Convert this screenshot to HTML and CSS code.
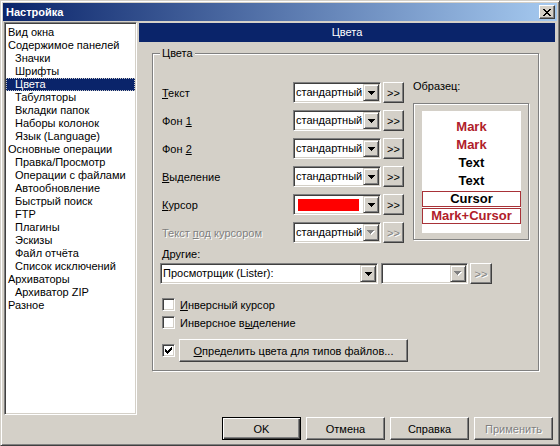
FILE: index.html
```html
<!DOCTYPE html>
<html lang="ru">
<head>
<meta charset="utf-8">
<title>Настройка</title>
<link rel="stylesheet" href="styles.css">
</head>
<body>
<div class="window">
  <div class="titlebar">
    <span class="title">Настройка</span>
    <span class="close"><svg width="8" height="7" viewBox="0 0 8 7"><path d="M0 0h2v1h1v1h2V1h1V0h2v1H7v1H6v1H5v1h1v1h1v1h1v1H6V6H5V5H3v1H2v1H0V6h1V5h1V4h1V3H2V2H1V1H0z" fill="#000"/></svg></span>
  </div>
  <div class="main">
    <ul class="tree">
      <li class="l0">Вид окна</li>
      <li class="l0">Содержимое панелей</li>
      <li class="l1">Значки</li>
      <li class="l1">Шрифты</li>
      <li class="l1 sel">Цвета</li>
      <li class="l1">Табуляторы</li>
      <li class="l1">Вкладки папок</li>
      <li class="l1">Наборы колонок</li>
      <li class="l1">Язык (Language)</li>
      <li class="l0">Основные операции</li>
      <li class="l1">Правка/Просмотр</li>
      <li class="l1">Операции с файлами</li>
      <li class="l1">Автообновление</li>
      <li class="l1">Быстрый поиск</li>
      <li class="l1">FTP</li>
      <li class="l1">Плагины</li>
      <li class="l1">Эскизы</li>
      <li class="l1">Файл отчёта</li>
      <li class="l1">Список исключений</li>
      <li class="l0">Архиваторы</li>
      <li class="l1">Архиватор ZIP</li>
      <li class="l0">Разное</li>
    </ul>
    <div class="panel">
      <div class="panel-head">Цвета</div>
      <fieldset class="group">
        <legend>Цвета</legend>
        <div class="top">
          <div class="rows">
            <div class="row">
              <span class="lbl"><u>Т</u>екст</span>
              <div class="combo"><span class="val">стандартный</span><span class="drop"><svg width="7" height="4" viewBox="0 0 7 4"><path d="M0 0h7v1H6v1H5v1H4v1H3V3H2V2H1V1H0z" fill="#000"/></svg></span></div>
              <span class="btn more">&gt;&gt;</span>
            </div>
            <div class="row">
              <span class="lbl">Фон <u>1</u></span>
              <div class="combo"><span class="val">стандартный</span><span class="drop"><svg width="7" height="4" viewBox="0 0 7 4"><path d="M0 0h7v1H6v1H5v1H4v1H3V3H2V2H1V1H0z" fill="#000"/></svg></span></div>
              <span class="btn more">&gt;&gt;</span>
            </div>
            <div class="row">
              <span class="lbl">Фон <u>2</u></span>
              <div class="combo"><span class="val">стандартный</span><span class="drop"><svg width="7" height="4" viewBox="0 0 7 4"><path d="M0 0h7v1H6v1H5v1H4v1H3V3H2V2H1V1H0z" fill="#000"/></svg></span></div>
              <span class="btn more">&gt;&gt;</span>
            </div>
            <div class="row">
              <span class="lbl"><u>В</u>ыделение</span>
              <div class="combo"><span class="val">стандартный</span><span class="drop"><svg width="7" height="4" viewBox="0 0 7 4"><path d="M0 0h7v1H6v1H5v1H4v1H3V3H2V2H1V1H0z" fill="#000"/></svg></span></div>
              <span class="btn more">&gt;&gt;</span>
            </div>
            <div class="row">
              <span class="lbl"><u>К</u>урсор</span>
              <div class="combo"><span class="swatch"></span><span class="drop"><svg width="7" height="4" viewBox="0 0 7 4"><path d="M0 0h7v1H6v1H5v1H4v1H3V3H2V2H1V1H0z" fill="#000"/></svg></span></div>
              <span class="btn more">&gt;&gt;</span>
            </div>
            <div class="row">
              <span class="lbl disabled">Текст <u>п</u>од курсором</span>
              <div class="combo"><span class="val">стандартный</span><span class="drop"><svg width="8" height="5" viewBox="0 0 8 5"><path d="M1 1h7v1H7v1H6v1H5v1H4V4H3V3H2V2H1z" fill="#fff"/><path d="M0 0h7v1H6v1H5v1H4v1H3V3H2V2H1V1H0z" fill="#808080"/></svg></span></div>
              <span class="btn more disabled">&gt;&gt;</span>
            </div>
          </div>
          <div class="sample-col">
            <div class="sample-lbl">Образец:</div>
            <div class="sample-frame">
              <div class="sample">
                <div class="s-line mark">Mark</div>
                <div class="s-line mark">Mark</div>
                <div class="s-line">Text</div>
                <div class="s-line">Text</div>
                <div class="s-cur">Cursor</div>
                <div class="s-cur mark">Mark+Cursor</div>
              </div>
            </div>
          </div>
        </div>
        <div class="other-lbl"><u>Д</u>ругие:</div>
        <div class="other-row">
          <div class="combo wide"><span class="val">Просмотрщик (Lister):</span><span class="drop"><svg width="7" height="4" viewBox="0 0 7 4"><path d="M0 0h7v1H6v1H5v1H4v1H3V3H2V2H1V1H0z" fill="#000"/></svg></span></div>
          <div class="combo mid"><span class="val"></span><span class="drop"><svg width="8" height="5" viewBox="0 0 8 5"><path d="M1 1h7v1H7v1H6v1H5v1H4V4H3V3H2V2H1z" fill="#fff"/><path d="M0 0h7v1H6v1H5v1H4v1H3V3H2V2H1V1H0z" fill="#808080"/></svg></span></div>
          <span class="btn more small disabled">&gt;&gt;</span>
        </div>
        <div class="check-row first">
          <span class="check"></span><span class="check-lbl"><u>И</u>нверсный курсор</span>
        </div>
        <div class="check-row second">
          <span class="check"></span><span class="check-lbl">Инверсное в<u>ы</u>деление</span>
        </div>
        <div class="check-row third">
          <span class="check"><svg width="7" height="7" viewBox="0 0 7 7"><path d="M6 0h1v3H6v1H5v1H4v1H3v1H2V6H1V5H0V2h1v1h1v1h1V3h1V2h1V1h1z" fill="#000"/></svg></span>
          <span class="btn wide-btn"><u>О</u>пределить цвета для типов файлов...</span>
        </div>
      </fieldset>
    </div>
  </div>
  <div class="buttons">
    <span class="btn dlg default">OK</span>
    <span class="btn dlg">Отмена</span>
    <span class="btn dlg">Справка</span>
    <span class="btn dlg disabled">Применить</span>
  </div>
</div>
</body>
</html>
```

FILE: styles.css
```css
* { box-sizing: border-box; }
html, body { margin: 0; padding: 0; }
body {
  font-family: "Liberation Sans", Arial, sans-serif;
  font-size: 11px;
  color: #000;
  background: #d4d0c8;
}
u { text-decoration: underline; text-underline-offset: 1px; }

.window {
  width: 560px;
  height: 446px;
  background: #d4d0c8;
  border: 1px solid;
  border-color: #d4d0c8 #404040 #404040 #d4d0c8;
  box-shadow: inset 1px 1px #fff, inset -1px -1px #808080;
  padding: 2px;
  display: flex;
  flex-direction: column;
}

.titlebar {
  height: 18px;
  flex: none;
  background: linear-gradient(to right, #0a246a, #a6caf0);
  display: flex;
  align-items: center;
  justify-content: space-between;
  padding: 0 2px 0 3px;
}
.title { color: #fff; font-weight: bold; font-size: 11px; }
.close {
  width: 16px;
  height: 14px;
  background: #d4d0c8;
  border: 1px solid;
  border-color: #fff #404040 #404040 #fff;
  box-shadow: inset -1px -1px #808080;
  display: flex;
  align-items: center;
  justify-content: center;
}
.close svg { display: block; }

.main {
  display: flex;
  height: 393px;
  margin-top: 1px;
  flex: none;
}

.tree {
  list-style: none;
  margin: 0 0 0 1px;
  width: 133px;
  height: 393px;
  background: #fff;
  border: 1px solid;
  border-color: #808080 #fff #fff #808080;
  box-shadow: inset 1px 1px #404040, inset -1px -1px #d4d0c8;
  padding: 3px 1px 1px 1px;
  overflow: hidden;
}
.tree li {
  height: 13px;
  line-height: 13px;
  white-space: nowrap;
}
.tree .l0 { padding-left: 2px; }
.tree .l1 { padding-left: 9px; }
.tree .sel {
  background: #0a246a;
  color: #fff;
  outline: 1px dotted #c8c8c8;
  outline-offset: -1px;
}

.panel {
  width: 416px;
  margin-left: 2px;
  display: flex;
  flex-direction: column;
}
.panel-head {
  margin-top: 1px;
  height: 19px;
  line-height: 19px;
  background: #0a246a;
  color: #fff;
  text-align: center;
}

.group {
  margin: 5px 16px 0 13px;
  padding: 20px 0 0 7px;
  border: 1px solid #808080;
  box-shadow: inset 1px 1px #fff, 1px 1px #fff;
  height: 324px;
  min-width: 0;
}
.group legend {
  padding: 0 2px;
  margin-left: 0;
  line-height: 13px;
  background: #d4d0c8;
}

.top { display: flex; height: 163px; }
.rows { margin-top: 2px; }
.row {
  display: flex;
  align-items: center;
  height: 21px;
  margin-bottom: 7px;
}
.lbl {
  width: 133px;
  padding-left: 2px;
  white-space: nowrap;
}
.disabled { color: #808080; text-shadow: 1px 1px 0 #fff; }

.combo {
  display: flex;
  width: 88px;
  height: 21px;
  background: #fff;
  border: 1px solid;
  border-color: #808080 #fff #fff #808080;
  box-shadow: inset 1px 1px #404040, inset -1px -1px #d4d0c8;
  padding: 1px;
}
.combo .val {
  flex: 1;
  min-width: 0;
  padding-left: 1px;
  line-height: 17px;
  white-space: nowrap;
  overflow: hidden;
  color: #000;
  text-shadow: none;
}
.combo .swatch {
  flex: 1;
  margin: 3px 4px 2px 3px;
  background: #ff0000;
}
.drop {
  width: 16px;
  height: 17px;
  flex: none;
  background: #d4d0c8;
  border: 1px solid;
  border-color: #d4d0c8 #404040 #404040 #d4d0c8;
  box-shadow: inset 1px 1px #fff, inset -1px -1px #808080;
  display: flex;
  align-items: center;
  justify-content: center;
}
.drop svg { display: block; }

.btn {
  display: flex;
  align-items: center;
  justify-content: center;
  background: #d4d0c8;
  border: 1px solid;
  border-color: #fff #404040 #404040 #fff;
  box-shadow: inset -1px -1px #808080, inset 1px 1px #d4d0c8;
  white-space: nowrap;
}
.more {
  width: 21px;
  height: 21px;
  margin-left: 2px;
}
.more.small { width: 22px; }

.sample-col { margin-left: 9px; }
.sample-lbl { line-height: 13px; }
.sample-frame {
  margin-top: 10px;
  width: 116px;
  border: 1px solid #808080;
  box-shadow: inset 1px 1px #fff, 1px 1px #fff;
  padding: 7px 7px 6px 8px;
}
.sample {
  height: 122px;
  background: #fff;
  padding-top: 7px;
  font: bold 13px "Liberation Sans", Arial, sans-serif;
  text-align: center;
}
.s-line { height: 18px; line-height: 18px; }
.s-cur {
  height: 16px;
  line-height: 14px;
  margin-top: 1px;
  border: 1px solid #a83238;
}
.mark { color: #b0202a; }

.other-lbl {
  margin-top: 5px;
  padding-left: 2px;
  line-height: 13px;
}
.other-row {
  display: flex;
  margin-top: 2px;
  height: 21px;
}
.combo.wide { width: 218px; }
.combo.mid { width: 87px; margin-left: 3px; }

.check-row {
  display: flex;
  align-items: center;
  padding-left: 2px;
}
.check-row.first { margin-top: 14px; height: 13px; }
.check-row.second { margin-top: 5px; height: 13px; }
.check-row.third { margin-top: 10px; height: 23px; }
.check {
  width: 13px;
  height: 13px;
  flex: none;
  background: #fff;
  border: 1px solid;
  border-color: #808080 #fff #fff #808080;
  box-shadow: inset 1px 1px #404040, inset -1px -1px #d4d0c8;
  display: flex;
  align-items: center;
  justify-content: center;
}
.check svg { display: block; }
.check-lbl { margin-left: 5px; }
.wide-btn {
  width: 229px;
  height: 23px;
  margin-left: 4px;
}

.buttons {
  display: flex;
  justify-content: flex-end;
  gap: 5px;
  margin-top: 2px;
  padding-right: 4px;
  height: 23px;
  flex: none;
}
.dlg { width: 79px; height: 23px; }
.dlg.default {
  border: 1px solid #000;
  box-shadow: inset 1px 1px #fff, inset -1px -1px #404040, inset -2px -2px #808080;
}
```
